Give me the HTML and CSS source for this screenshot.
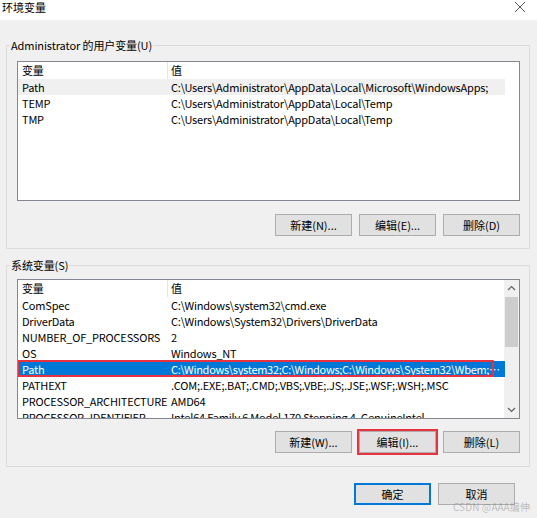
FILE: index.html
```html
<!DOCTYPE html>
<html lang="zh-CN">
<head>
<meta charset="utf-8">
<title>环境变量</title>
<link rel="stylesheet" href="styles.css">
</head>
<body>
<div class="window">
  <div class="titlebar">
    <span class="title">环境变量</span>
    <svg class="close" width="12" height="12" viewBox="0 0 12 12"><path d="M1 1 L11 11 M11 1 L1 11" stroke="#555" stroke-width="1"/></svg>
  </div>
  <div class="body">
    <section class="group group-user">
      <div class="legend"><span>Administrator 的用户变量(U)</span></div>
      <div class="listbox">
        <div class="list-inner">
          <div class="row header"><span class="c1">变量</span><span class="c2">值</span></div>
          <div class="row hover"><span class="c1">Path</span><span class="c2">C:\Users\Administrator\AppData\Local\Microsoft\WindowsApps;</span></div>
          <div class="row"><span class="c1">TEMP</span><span class="c2">C:\Users\Administrator\AppData\Local\Temp</span></div>
          <div class="row"><span class="c1">TMP</span><span class="c2">C:\Users\Administrator\AppData\Local\Temp</span></div>
        </div>
      </div>
      <div class="buttons">
        <button class="btn">新建(N)...</button>
        <button class="btn">编辑(E)...</button>
        <button class="btn">删除(D)</button>
      </div>
    </section>
    <section class="group group-sys">
      <div class="legend"><span>系统变量(S)</span></div>
      <div class="listbox">
        <div class="list-inner">
          <div class="row header"><span class="c1">变量</span><span class="c2">值</span></div>
          <div class="row"><span class="c1">ComSpec</span><span class="c2">C:\Windows\system32\cmd.exe</span></div>
          <div class="row"><span class="c1">DriverData</span><span class="c2">C:\Windows\System32\Drivers\DriverData</span></div>
          <div class="row"><span class="c1">NUMBER_OF_PROCESSORS</span><span class="c2">2</span></div>
          <div class="row"><span class="c1">OS</span><span class="c2">Windows_NT</span></div>
          <div class="row selected"><span class="c1">Path</span><span class="c2">C:\Windows\system32;C:\Windows;C:\Windows\System32\Wbem;C:\Windows\System32\WindowsPowerShell\v1.0\</span><span class="mark"></span></div>
          <div class="row"><span class="c1">PATHEXT</span><span class="c2">.COM;.EXE;.BAT;.CMD;.VBS;.VBE;.JS;.JSE;.WSF;.WSH;.MSC</span></div>
          <div class="row"><span class="c1">PROCESSOR_ARCHITECTURE</span><span class="c2">AMD64</span></div>
          <div class="row"><span class="c1">PROCESSOR_IDENTIFIER</span><span class="c2">Intel64 Family 6 Model 170 Stepping 4, GenuineIntel</span></div>
        </div>
        <div class="scrollbar">
          <svg class="arrow" width="15" height="17" viewBox="0 0 15 17"><path d="M4 10 L7.5 6.5 L11 10" fill="none" stroke="#606060" stroke-width="1.2"/></svg>
          <div class="track"><div class="thumb"></div></div>
          <svg class="arrow" width="15" height="17" viewBox="0 0 15 17"><path d="M4 7 L7.5 10.5 L11 7" fill="none" stroke="#606060" stroke-width="1.2"/></svg>
        </div>
      </div>
      <div class="buttons">
        <button class="btn">新建(W)...</button>
        <button class="btn marked">编辑(I)...</button>
        <button class="btn">删除(L)</button>
      </div>
    </section>
    <div class="footer">
      <button class="btn default">确定</button>
      <button class="btn">取消</button>
    </div>
  </div>
  <div class="watermark">CSDN @AAA编伸</div>
</div>
</body>
</html>
```
FILE: styles.css
```css
html, body {
  margin: 0;
  padding: 0;
}
body {
  background: #f0f0f0;
  font-family: "Noto Sans CJK SC", sans-serif;
  font-size: 11px;
  color: #000;
  width: 537px;
  height: 518px;
  overflow: hidden;
}
.window {
  position: relative;
  height: 518px;
}
.titlebar {
  height: 20px;
  background: #fff;
  display: flex;
  justify-content: space-between;
  align-items: flex-start;
  padding: 0 11px 0 2px;
}
.title {
  line-height: 14px;
  font-size: 11px;
}
.close {
  margin-top: 1px;
}
.body {
  padding: 25px 7px 0 6px;
  display: flex;
  flex-direction: column;
}
.group {
  border: 1px solid #dcdcdc;
  padding: 0 9px 12px 10px;
}
.group-sys {
  margin-top: 16px;
  padding-bottom: 13px;
}
.legend {
  margin-top: -9px;
  height: 16px;
  line-height: 16px;
  display: flex;
}
.legend span {
  margin-left: -7px;
  padding: 0 1px;
  background: #f0f0f0;
  letter-spacing: -0.1px;
}
.listbox {
  margin-top: 8px;
  height: 140px;
  box-sizing: border-box;
  border: 1px solid #828790;
  background: #fff;
  display: flex;
  overflow: hidden;
}
.group-sys .listbox {
  margin-top: 6px;
}
.list-inner {
  flex: 1;
  min-width: 0;
}
.row {
  display: flex;
  height: 16px;
  line-height: 16px;
  white-space: nowrap;
  position: relative;
  width: 487px;
  letter-spacing: -0.2px;
}
.row.header {
  height: 17px;
}
.row.header .c1 {
  border-right: 1px solid #e5e5e5;
}
.c1 {
  width: 150px;
  box-sizing: border-box;
  padding-left: 4px;
  flex: none;
  overflow: hidden;
}
.c2 {
  flex: 1;
  min-width: 0;
  padding: 0 11px 0 3px;
  overflow: hidden;
  text-overflow: ellipsis;
}
.row.hover {
  background: #f0f0f0;
}
.row.selected {
  background: #0078d7;
  color: #fff;
}
.row.selected .c2 {
  padding-right: 0;
  letter-spacing: -0.3px;
}
.mark {
  position: absolute;
  left: -1px;
  top: -1px;
  width: 477px;
  height: 17px;
  box-sizing: border-box;
  border: 2px solid #e8323f;
  border-radius: 1px;
}
.scrollbar {
  width: 15px;
  flex: none;
  background: #f0f0f0;
  display: flex;
  flex-direction: column;
}
.arrow {
  display: block;
  flex: none;
}
.track {
  flex: 1;
}
.thumb {
  height: 50px;
  background: #cdcdcd;
  margin: 0 1px;
}
.buttons {
  display: flex;
  justify-content: flex-end;
  gap: 7px;
  margin-top: 13px;
}
.group-sys .buttons {
  margin-top: 12px;
}
.btn {
  width: 77px;
  height: 22px;
  box-sizing: border-box;
  background: #e1e1e1;
  border: 1px solid #adadad;
  font-family: "Noto Sans CJK SC", sans-serif;
  font-size: 11px;
  color: #000;
  padding: 0;
  line-height: 18px;
  margin: 0;
}
.btn.marked {
  outline: 2px solid #e8323f;
  outline-offset: 0;
}
.btn.default {
  border: 1px solid #0078d7;
  box-shadow: inset 0 0 0 1px #0078d7;
}
.footer {
  display: flex;
  justify-content: flex-end;
  gap: 7px;
  margin-top: 16px;
  padding-right: 15px;
}
.watermark {
  position: absolute;
  right: 7px;
  bottom: 4px;
  font-size: 10px;
  color: rgba(120, 120, 120, 0.45);
  letter-spacing: 0.1px;
}
```
